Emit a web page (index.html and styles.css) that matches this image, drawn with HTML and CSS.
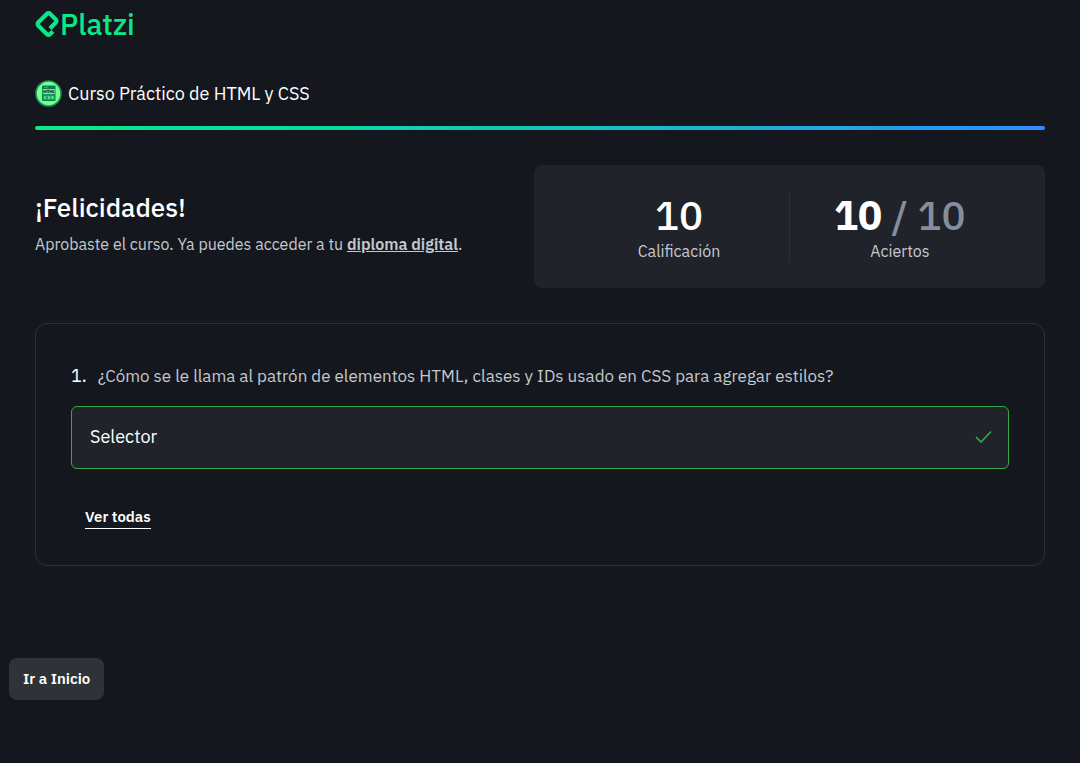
FILE: index.html
```html
<!DOCTYPE html>
<html lang="es">
<head>
<meta charset="utf-8">
<meta name="viewport" content="width=device-width, initial-scale=1">
<title>Curso Práctico de HTML y CSS</title>
<link rel="stylesheet" href="styles.css">
</head>
<body>
<div class="page">
  <header class="header">
    <a class="logo" href="#">
      <svg class="logo-mark" viewBox="1 0 22 24" aria-hidden="true">
        <path d="M10.64 1.127L2.487 9.282a3.842 3.842 0 000 5.436l8.155 8.155a3.842 3.842 0 005.436 0l2.719-2.718-2.719-2.718-2.718 2.718L5.204 12l8.155-8.155 5.437 5.437-5.437 5.436 2.718 2.719L21.514 12a3.842 3.842 0 000-5.437l-5.446-5.436a3.828 3.828 0 00-5.428 0z"/>
      </svg>
      <span>Platzi</span>
    </a>
  </header>
  <main class="content">
    <section class="course">
      <svg class="course-badge" viewBox="0 0 27 27" aria-hidden="true">
        <circle cx="13.5" cy="13.5" r="12.5" fill="#7dff8e" stroke="#119756" stroke-width="1.6"/>
        <rect x="7" y="5.5" width="13.5" height="15.5" rx="1" fill="#087a54"/>
        <path d="M9 7.2h4" stroke="#3cc878" stroke-width=".8"/>
        <rect x="7.8" y="9" width="12" height="5.2" fill="#6bed8c"/>
        <path d="M9 10v3M11 10v3M9 11.5h2M12 10.4h2.2M13.1 10.4v2.6M15 13v-2.6l1 1.3 1-1.3V13M18.2 10v2.6h1.2" stroke="#064b39" stroke-width="1" fill="none"/>
        <rect x="7.8" y="15.2" width="12" height="4.8" fill="#17a366"/>
        <path d="M11.2 16.5H9.6v2h1.6M14.7 16.5h-1.5v1h1.5v1h-1.5M18.2 16.5h-1.5v1h1.5v1h-1.5" stroke="#6bed8c" stroke-width=".9" fill="none"/>
      </svg>
      <h1 class="course-title">Curso Práctico de HTML y CSS</h1>
    </section>
    <div class="bar"></div>
    <section class="summary">
      <div class="message">
        <h2 class="message-title">¡Felicidades!</h2>
        <p class="message-text">Aprobaste el curso. Ya puedes acceder a tu <a href="#">diploma digital</a>.</p>
      </div>
      <div class="stats">
        <div class="stat">
          <strong class="stat-value">10</strong>
          <span class="stat-label">Calificación</span>
        </div>
        <div class="stat">
          <strong class="stat-value"><b>10</b> <span class="stat-total">/ 10</span></strong>
          <span class="stat-label">Aciertos</span>
        </div>
      </div>
    </section>
    <section class="review">
      <div class="question">
        <span class="question-number">1.</span>
        <p class="question-text">¿Cómo se le llama al patrón de elementos HTML, clases y IDs usado en CSS para agregar estilos?</p>
      </div>
      <div class="answer">
        <span>Selector</span>
        <svg class="check" viewBox="0 0 18 18" role="img" aria-label="Correcta"><path d="M2 9l5 5L17 3.5" fill="none"/></svg>
      </div>
      <button class="all" type="button">Ver todas</button>
    </section>
  </main>
  <footer class="footer"><a class="home" href="#">Ir a Inicio</a></footer>
</div>
</body>
</html>
```
FILE: styles.css
```css
* {
  box-sizing: border-box;
}

body {
  margin: 0;
  background: #14171e;
  color: #fff;
  font-family: "IBM Plex Sans", Roboto, sans-serif;
  font-size: 18px;
  line-height: 24px;
}

h1, h2, p {
  margin: 0;
}

a {
  color: inherit;
}

.header {
  display: flex;
  padding: 8px 35px;
}

.logo {
  display: flex;
  align-items: center;
  gap: 1px;
  color: #0ae98a;
  font-size: 29px;
  font-weight: 500;
  line-height: 32px;
  text-decoration: none;
}

.logo-mark {
  width: 24px;
  height: 26px;
  fill: #0ae98a;
}

.content {
  padding: 32px 35px 0;
}

.course {
  display: flex;
  align-items: center;
  gap: 6px;
}

.course-badge {
  width: 27px;
  height: 27px;
}

.course-title {
  font-size: 18px;
  font-weight: 400;
}

.bar {
  height: 4px;
  margin-top: 19px;
  border-radius: 2px;
  background: linear-gradient(90deg, #0ae98a, #12c8b8 50%, #2f8cff);
}

.summary {
  display: grid;
  grid-template-columns: 10fr 11fr;
  gap: 35px;
  margin-top: 35px;
}

.message {
  padding-top: 24px;
}

.message-title {
  font-size: 26px;
  font-weight: 500;
  line-height: 36px;
}

.message-text {
  margin-top: 7px;
  color: #c5c8ce;
  font-size: 16px;
  line-height: 24px;
}

.message-text a {
  font-weight: 600;
}

.stats {
  display: grid;
  grid-template-columns: 1fr 1fr;
  padding: 26px 35px;
  border-radius: 8px;
  background: #20232a;
}

.stat {
  display: flex;
  flex-direction: column;
  align-items: center;
}

.stat:first-child {
  border-right: 1px solid #2a2e36;
}

.stat-value {
  font-size: 40px;
  font-weight: 500;
  line-height: 49px;
}

.stat-value b {
  font-weight: 700;
}

.stat-total {
  color: #868e9b;
}

.stat-label {
  color: #c5c8ce;
  font-size: 16px;
  line-height: 22px;
}

.review {
  margin-top: 35px;
  padding: 40px 35px 36px;
  border: 1px solid #2c2f37;
  border-radius: 12px;
}

.question {
  display: flex;
  align-items: baseline;
  gap: 11px;
}

.question-text {
  color: #c5c8ce;
  font-size: 17px;
}

.answer {
  display: flex;
  align-items: center;
  justify-content: space-between;
  margin-top: 18px;
  padding: 18px 16px 19px 18px;
  border: 1px solid #33a84b;
  border-radius: 6px;
  background: #20232a;
}

.check {
  width: 18px;
  height: 18px;
  stroke: #33a84b;
  stroke-width: 1.6;
}

.all {
  display: block;
  margin: 37px 0 0 14px;
  padding: 0;
  border: 0;
  border-bottom: 1px solid #fff;
  background: none;
  color: #fff;
  font: 600 15px/22px "IBM Plex Sans", Roboto, sans-serif;
}

.footer {
  display: flex;
  padding: 92px 9px 0;
}

.home {
  padding: 10px 14px;
  border-radius: 8px;
  background: #2e3239;
  font-size: 15px;
  font-weight: 600;
  line-height: 22px;
  text-decoration: none;
}
```
